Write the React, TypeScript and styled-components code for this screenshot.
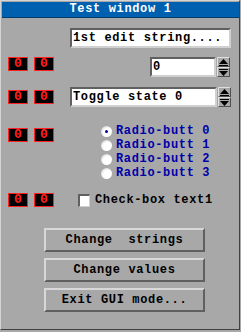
import React from "react";
import styled, { createGlobalStyle } from "styled-components";

const Global = createGlobalStyle`
  html, body { margin: 0; padding: 0; background: #a8a8a8; }
  body { font-family: "Liberation Mono", "DejaVu Sans Mono", monospace; font-weight: bold; font-size: 12px; letter-spacing: 0.65px; }
`;

const Window = styled.div`
  box-sizing: border-box;
  width: 240px;
  height: 330px;
  background: #a8a8a8;
  border-top: 1px solid #d4d4d4;
  border-left: 1px solid #d4d4d4;
  border-right: 1px solid #404040;
  border-bottom: 1px solid #404040;
  padding: 1px 0 0 1px;
  display: flex;
  flex-direction: column;
`;

const TitleBar = styled.div`
  height: 16px;
  background: #0060b0;
  color: #ffffff;
  display: flex;
  align-items: center;
  justify-content: center;
  line-height: 15px;
  border-bottom: 1px solid #003c70;
  box-sizing: border-box;
`;

const Body = styled.div`
  display: flex;
  flex-direction: column;
  padding-left: 6px;
`;

const Row = styled.div<{ $mt: number }>`
  display: flex;
  align-items: flex-start;
  margin-top: ${(p) => p.$mt}px;
`;

const Counters = styled.div<{ $mt: number }>`
  display: flex;
  gap: 6px;
  width: 62px;
  margin-top: ${(p) => p.$mt}px;
`;

const Counter = styled.div`
  box-sizing: border-box;
  width: 20px;
  height: 14px;
  background: #000;
  border: 1px solid #ff2020;
  color: #ff2020;
  display: flex;
  align-items: center;
  justify-content: center;
  line-height: 12px;
  font-size: 13px;
  letter-spacing: 0;
`;

const Field = styled.div<{ $w: number; $ml: number }>`
  box-sizing: border-box;
  width: ${(p) => p.$w}px;
  height: 20px;
  margin-left: ${(p) => p.$ml}px;
  background: #fff;
  border-top: 2px solid #606060;
  border-left: 2px solid #606060;
  border-right: 2px solid #d0d0d0;
  border-bottom: 2px solid #d0d0d0;
  color: #000;
  padding-left: 1px;
  line-height: 16px;
  white-space: pre;
  overflow: hidden;
`;

const Spin = styled.div`
  display: flex;
  flex-direction: column;
  margin-left: 1px;
`;

const SpinButton = styled.div`
  box-sizing: border-box;
  width: 13px;
  height: 10px;
  background: #a8a8a8;
  border-top: 1px solid #e0e0e0;
  border-left: 1px solid #e0e0e0;
  border-right: 1px solid #505050;
  border-bottom: 1px solid #505050;
  display: flex;
  align-items: center;
  justify-content: center;
`;

const RadioGroup = styled.div`
  display: flex;
  flex-direction: column;
  margin-left: 31px;
`;

const RadioRow = styled.div`
  display: flex;
  align-items: center;
  height: 14px;
  gap: 4px;
  color: #0000a8;
  white-space: pre;
`;

const RadioCircle = styled.div`
  box-sizing: border-box;
  width: 11px;
  height: 11px;
  border-radius: 50%;
  background: radial-gradient(circle at 60% 60%, #ffffff 45%, #e0e0e0 70%, #808080 100%);
  display: flex;
  align-items: center;
  justify-content: center;
`;

const Dot = styled.div`
  width: 3px;
  height: 3px;
  border-radius: 50%;
  background: #0000a8;
`;

const CheckRow = styled.div`
  display: flex;
  align-items: center;
  gap: 5px;
  margin-left: 8px;
  height: 14px;
  color: #000;
  white-space: pre;
`;

const CheckBox = styled.div`
  box-sizing: border-box;
  width: 12px;
  height: 13px;
  background: #fff;
  border-top: 2px solid #606060;
  border-left: 2px solid #606060;
  border-right: 1px solid #d0d0d0;
  border-bottom: 1px solid #d0d0d0;
`;

const Buttons = styled.div`
  display: flex;
  flex-direction: column;
  gap: 6px;
  margin-top: 21px;
  padding-left: 36px;
`;

const Button = styled.div`
  box-sizing: border-box;
  width: 161px;
  height: 24px;
  background: #a8a8a8;
  border-top: 2px solid #d8d8d8;
  border-left: 2px solid #d8d8d8;
  border-right: 2px solid #606060;
  border-bottom: 2px solid #606060;
  display: flex;
  align-items: center;
  justify-content: center;
  color: #000;
  white-space: pre;
`;

const Arrow = ({ up }: { up: boolean }) => (
  <svg width="9" height="7" viewBox="0 0 9 7">
    {up ? (
      <>
        <polygon points="4.5,0 9,5 0,5" fill="#000" />
        <rect x="0" y="6" width="9" height="1" fill="#000" />
      </>
    ) : (
      <>
        <rect x="0" y="0" width="9" height="1" fill="#000" />
        <polygon points="0,2 9,2 4.5,7" fill="#000" />
      </>
    )}
  </svg>
);

const CounterPair = ({ mt }: { mt: number }) => (
  <Counters $mt={mt}>
    <Counter>0</Counter>
    <Counter>0</Counter>
  </Counters>
);

const SpinButtons = () => (
  <Spin>
    <SpinButton>
      <Arrow up />
    </SpinButton>
    <SpinButton>
      <Arrow up={false} />
    </SpinButton>
  </Spin>
);

export default function App() {
  return (
    <>
      <Global />
      <Window>
        <TitleBar>Test window 1</TitleBar>
        <Body>
          <Row $mt={10}>
            <Field $w={161} $ml={62}>1st edit string....</Field>
          </Row>
          <Row $mt={9}>
            <CounterPair mt={0} />
            <Field $w={66} $ml={80}>0</Field>
            <SpinButtons />
          </Row>
          <Row $mt={10}>
            <CounterPair mt={3} />
            <Field $w={147} $ml={0}>Toggle state 0</Field>
            <SpinButtons />
          </Row>
          <Row $mt={17}>
            <CounterPair mt={4} />
            <RadioGroup>
              {[0, 1, 2, 3].map((i) => (
                <RadioRow key={i}>
                  <RadioCircle>{i === 0 && <Dot />}</RadioCircle>
                  {`Radio-butt ${i}`}
                </RadioRow>
              ))}
            </RadioGroup>
          </Row>
          <Row $mt={13}>
            <CounterPair mt={0} />
            <CheckRow>
              <CheckBox />
              Check-box text1
            </CheckRow>
          </Row>
          <Buttons>
            <Button>Change  strings</Button>
            <Button>Change values</Button>
            <Button>Exit GUI mode...</Button>
          </Buttons>
        </Body>
      </Window>
    </>
  );
}
